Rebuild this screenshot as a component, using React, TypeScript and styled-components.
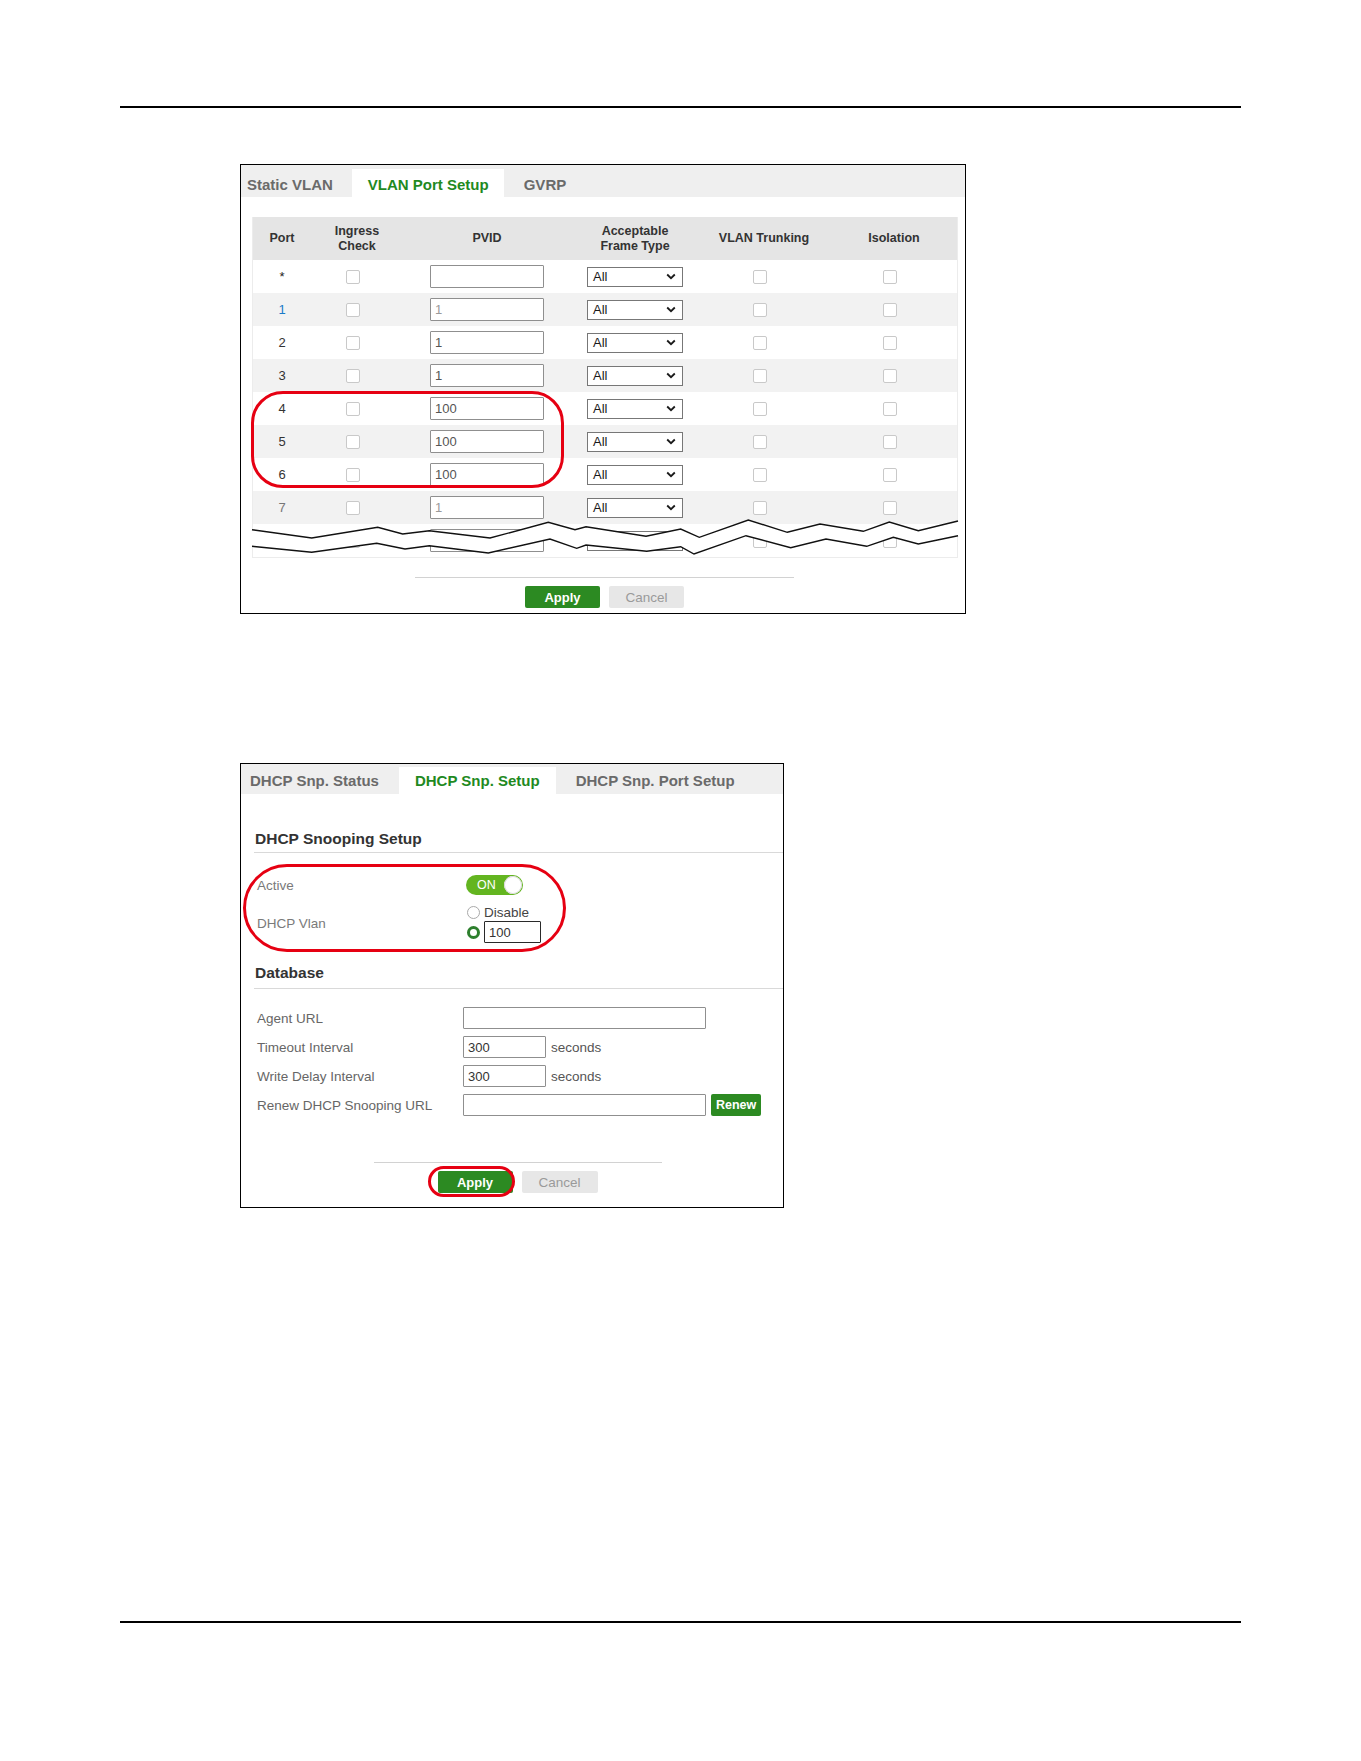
import styled, { createGlobalStyle } from "styled-components";

const GlobalStyle = createGlobalStyle`
  body {
    margin: 0;
    background: #fff;
    font-family: "Liberation Sans", Arial, sans-serif;
    color: #333;
  }
`;

const Page = styled.div`
  width: 1361px;
  min-height: 1761px;
  padding: 106px 120px 0;
  box-sizing: border-box;
`;

const Rule = styled.div<{ $gap: number }>`
  margin-top: ${(p) => p.$gap}px;
  border-top: 2px solid #000;
`;

const Figure = styled.div<{ $width: number; $gap: number; $bottom: number }>`
  position: relative;
  width: ${(p) => p.$width}px;
  margin: ${(p) => p.$gap}px 0 0 120px;
  padding-bottom: ${(p) => p.$bottom}px;
  border: 1px solid #000;
  box-sizing: border-box;
  background: #fff;
`;

const TabBar = styled.div<{ $height: number }>`
  display: flex;
  align-items: flex-end;
  height: ${(p) => p.$height}px;
  background: #efefef;
`;

const Tab = styled.div<{ $active?: boolean; $pad: string; $height: number; $drop: number }>`
  height: ${(p) => p.$height}px;
  box-sizing: border-box;
  padding: ${(p) => p.$pad};
  padding-top: ${(p) => p.$drop}px;
  line-height: ${(p) => p.$height - p.$drop}px;
  font-size: 15px;
  font-weight: bold;
  white-space: nowrap;
  color: ${(p) => (p.$active ? "#1f8a1f" : "#6a6a6a")};
  background: ${(p) => (p.$active ? "#fff" : "transparent")};
`;

/* ---------- VLAN port table ---------- */

const cols = "58px 92px 168px 128px 130px 130px";

const TableWrap = styled.div`
  position: relative;
  width: 706px;
  margin: 20px 0 0 11px;
  border: 1px solid #ececec;
  border-top: 0;
  box-sizing: border-box;
`;

const HeadRow = styled.div`
  display: grid;
  grid-template-columns: ${cols};
  align-items: center;
  height: 43px;
  background: #e5e5e5;
  font-size: 12.5px;
  font-weight: bold;
  line-height: 15px;
  text-align: center;
  color: #333;
`;

const Row = styled.div<{ $shade: boolean; $height: number }>`
  display: grid;
  grid-template-columns: ${cols};
  align-items: center;
  height: ${(p) => p.$height}px;
  background: ${(p) => (p.$shade ? "#f2f2f2" : "#fff")};
  overflow: hidden;
`;

const Cell = styled.div`
  display: flex;
  justify-content: center;
  align-items: center;
`;

const PortNo = styled.span<{ $tone: string }>`
  font-size: 13px;
  color: ${(p) => p.$tone};
`;

const Check = styled.input.attrs({ type: "checkbox" })`
  appearance: none;
  width: 14px;
  height: 14px;
  margin: 0 9px 0 0;
  border: 1.5px solid #c9c9c9;
  border-radius: 2px;
  background: #fff;
  box-sizing: border-box;
`;

const TextBox = styled.input<{ $width: number; $height: number; $tone?: string; $dark?: boolean }>`
  width: ${(p) => p.$width}px;
  height: ${(p) => p.$height}px;
  padding: 0 0 0 4px;
  margin: 0;
  border: ${(p) => (p.$dark ? "1.5px solid #2a2a2a" : "1px solid #8f8f8f")};
  border-radius: 1px;
  box-sizing: border-box;
  font-family: "Liberation Sans", Arial, sans-serif;
  font-size: 13px;
  color: ${(p) => p.$tone ?? "#555"};
  background: #fff;
  outline: none;
`;

const SelectBox = styled.div`
  display: flex;
  justify-content: space-between;
  align-items: center;
  width: 96px;
  height: 20px;
  padding: 0 6px 0 5px;
  border: 1px solid #777;
  box-sizing: border-box;
  font-size: 13px;
  color: #1a1a1a;
  background: #fff;
`;

const BreakMark = styled.svg`
  position: absolute;
  left: -1px;
  top: 297px;
  overflow: visible;
`;

/* ---------- footer ---------- */

const Footer = styled.div<{ $gap: number; $shift: number }>`
  display: flex;
  justify-content: center;
  margin-top: ${(p) => p.$gap}px;
  padding-left: ${(p) => p.$shift}px;
`;

const FooterInner = styled.div<{ $width: number }>`
  display: flex;
  justify-content: center;
  gap: 9px;
  width: ${(p) => p.$width}px;
  padding-top: 8px;
  border-top: 1px solid #d2d2d2;
`;

const Button = styled.button<{ $primary?: boolean; $width: number }>`
  width: ${(p) => p.$width}px;
  height: 22px;
  padding: 0;
  border: 0;
  border-radius: 2px;
  font-family: "Liberation Sans", Arial, sans-serif;
  font-size: ${(p) => (p.$primary ? 13 : 13.5)}px;
  font-weight: ${(p) => (p.$primary ? "bold" : "normal")};
  color: ${(p) => (p.$primary ? "#fff" : "#9a9a9a")};
  background: ${(p) => (p.$primary ? "#2c8a22" : "#e7e7e7")};
`;

const Highlight = styled.div<{ $radius: string }>`
  position: absolute;
  border: 3px solid #e60012;
  border-radius: ${(p) => p.$radius};
  box-sizing: border-box;
  pointer-events: none;
`;

/* ---------- DHCP snooping form ---------- */

const SectionTitle = styled.div<{ $gap: number; $pad: number }>`
  margin: ${(p) => p.$gap}px 0 0 13px;
  padding: 0 0 ${(p) => p.$pad}px 1px;
  border-bottom: 1px solid #d9d9d9;
  font-size: 15.5px;
  font-weight: bold;
  line-height: 20px;
  color: #333;
`;

const FieldRow = styled.div<{ $gap: number }>`
  display: flex;
  align-items: center;
  margin: ${(p) => p.$gap}px 0 0 16px;
  min-height: 22px;
`;

const Label = styled.div<{ $light?: boolean }>`
  width: 206px;
  font-size: 13.5px;
  color: ${(p) => (p.$light ? "#7a7a7a" : "#666")};
`;

const Unit = styled.span`
  margin-left: 5px;
  font-size: 13.5px;
  color: #555;
`;

const Switch = styled.div`
  display: flex;
  justify-content: space-between;
  align-items: center;
  width: 57px;
  height: 20px;
  margin-left: 3px;
  padding: 0 1px 0 11px;
  border-radius: 10px;
  box-sizing: border-box;
  background: #63b520;
  color: #fff;
  font-size: 12.5px;
`;

const Knob = styled.span`
  width: 18px;
  height: 18px;
  border-radius: 50%;
  background: #fff;
  box-shadow: inset 0 0 0 1px #d8d8d8;
`;

const RadioGroup = styled.div`
  display: flex;
  flex-direction: column;
  margin-left: 4px;
`;

const RadioLine = styled.div<{ $height: number }>`
  display: flex;
  align-items: center;
  gap: 4px;
  height: ${(p) => p.$height}px;
  font-size: 13.5px;
  color: #444;
`;

const Radio = styled.span<{ $on?: boolean }>`
  width: 13px;
  height: 13px;
  border-radius: 50%;
  box-sizing: border-box;
  border: ${(p) => (p.$on ? "3.5px solid #2d7f2d" : "1px solid #a9a9a9")};
  background: #fff;
`;

const SmallButton = styled.button`
  height: 22px;
  margin-left: 5px;
  padding: 0 5px;
  border: 0;
  border-radius: 2px;
  font-family: "Liberation Sans", Arial, sans-serif;
  font-size: 12.5px;
  font-weight: bold;
  color: #fff;
  background: #2c8a22;
`;

const Chevron = () => (
  <svg width="10" height="7" viewBox="0 0 10 7">
    <path d="M1.2 1.5 L5 5.2 L8.8 1.5" fill="none" stroke="#1a1a1a" strokeWidth="1.8" />
  </svg>
);

type PortRow = { port: string; pvid: string; tone: string; pvidTone?: string };

const ports: PortRow[] = [
  { port: "*", pvid: "", tone: "#222" },
  { port: "1", pvid: "1", tone: "#1b7bc8", pvidTone: "#9a9a9a" },
  { port: "2", pvid: "1", tone: "#333" },
  { port: "3", pvid: "1", tone: "#333" },
  { port: "4", pvid: "100", tone: "#333" },
  { port: "5", pvid: "100", tone: "#333" },
  { port: "6", pvid: "100", tone: "#333" },
  { port: "7", pvid: "1", tone: "#777", pvidTone: "#9a9a9a" },
  { port: "", pvid: "", tone: "#333" },
];

// break mark drawn over the cut-off last row
const upper: [number, number][] = [
  [0, 15.7], [59.7, 24], [125.7, 13.3], [150.7, 20], [177.3, 16.7], [238, 24],
  [296.3, 8.3], [323, 15.7], [334, 12.7], [394, 22.3], [428.7, 15], [447.3, 23.3],
  [496.3, 6], [535.3, 18.3], [568, 10], [611.3, 17.3], [637.3, 8], [666.3, 16.7], [706, 7],
];
const lower: [number, number][] = [
  [0, 32.3], [59.7, 38.3], [124.7, 29.3], [153, 35], [177.3, 31.7], [236.3, 39],
  [298, 25], [324.7, 34.3], [334, 31], [394.7, 37.3], [428.7, 32.7], [442, 40],
  [494, 21.7], [538.7, 33.7], [574, 25], [614.7, 32.3], [641.3, 23.3], [666.3, 30], [706, 21.7],
];
const pts = (list: [number, number][]) => list.map(([x, y]) => `${x},${y}`).join(" ");

const VlanPortSetup = () => (
  <Figure $width={726} $gap={56} $bottom={5}>
    <TabBar $height={32}>
      <Tab $pad="0 19px 0 6px" $height={28} $drop={3}>Static VLAN</Tab>
      <Tab $active $pad="0 15px 0 16px" $height={28} $drop={3}>VLAN Port Setup</Tab>
      <Tab $pad="0 15px 0 20px" $height={28} $drop={3}>GVRP</Tab>
    </TabBar>

    <TableWrap>
      <HeadRow>
        <div>Port</div>
        <div>Ingress<br />Check</div>
        <div>PVID</div>
        <div>Acceptable<br />Frame Type</div>
        <div>VLAN Trunking</div>
        <div>Isolation</div>
      </HeadRow>
      {ports.map((r, i) => (
        <Row key={i} $shade={i % 2 === 1} $height={i === ports.length - 1 ? 33 : 33}>
          <Cell><PortNo $tone={r.tone}>{r.port}</PortNo></Cell>
          <Cell><Check readOnly /></Cell>
          <Cell><TextBox $width={114} $height={23} $tone={r.pvidTone} defaultValue={r.pvid} readOnly /></Cell>
          <Cell><SelectBox>All<Chevron /></SelectBox></Cell>
          <Cell><Check readOnly /></Cell>
          <Cell><Check readOnly /></Cell>
        </Row>
      ))}
      <BreakMark width="706" height="45">
        <polygon points={pts([...upper, ...[...lower].reverse()])} fill="#fff" />
        <polyline points={pts(upper)} fill="none" stroke="#111" strokeWidth="1.4" />
        <polyline points={pts(lower)} fill="none" stroke="#111" strokeWidth="1.4" />
      </BreakMark>
    </TableWrap>

    <Footer $gap={19} $shift={3}>
      <FooterInner $width={379}>
        <Button $primary $width={75}>Apply</Button>
        <Button $width={75}>Cancel</Button>
      </FooterInner>
    </Footer>

    <Highlight $radius="32px" style={{ left: 10, top: 226, width: 313, height: 97 }} />
  </Figure>
);

const DhcpSnoopingSetup = () => (
  <Figure $width={544} $gap={149} $bottom={14}>
    <TabBar $height={30}>
      <Tab $pad="0 20px 0 9px" $height={27} $drop={0}>DHCP Snp. Status</Tab>
      <Tab $active $pad="0 16px 0 16px" $height={27} $drop={0}>DHCP Snp. Setup</Tab>
      <Tab $pad="0 10px 0 20px" $height={27} $drop={0}>DHCP Snp. Port Setup</Tab>
    </TabBar>

    <SectionTitle $gap={35} $pad={3}>DHCP Snooping Setup</SectionTitle>
    <FieldRow $gap={21}>
      <Label $light>Active</Label>
      <Switch>ON<Knob /></Switch>
    </FieldRow>
    <FieldRow $gap={8}>
      <Label $light>DHCP Vlan</Label>
      <RadioGroup>
        <RadioLine $height={17}><Radio />Disable</RadioLine>
        <RadioLine $height={22}>
          <Radio $on />
          <TextBox $width={57} $height={22} $dark $tone="#333" defaultValue="100" readOnly />
        </RadioLine>
      </RadioGroup>
    </FieldRow>

    <SectionTitle $gap={20} $pad={5}>Database</SectionTitle>
    <FieldRow $gap={18}>
      <Label>Agent URL</Label>
      <TextBox $width={243} $height={22} readOnly />
    </FieldRow>
    <FieldRow $gap={7}>
      <Label>Timeout Interval</Label>
      <TextBox $width={83} $height={22} $tone="#333" defaultValue="300" readOnly />
      <Unit>seconds</Unit>
    </FieldRow>
    <FieldRow $gap={7}>
      <Label>Write Delay Interval</Label>
      <TextBox $width={83} $height={22} $tone="#333" defaultValue="300" readOnly />
      <Unit>seconds</Unit>
    </FieldRow>
    <FieldRow $gap={7}>
      <Label>Renew DHCP Snooping URL</Label>
      <TextBox $width={243} $height={22} readOnly />
      <SmallButton>Renew</SmallButton>
    </FieldRow>

    <Footer $gap={46} $shift={11}>
      <FooterInner $width={288}>
        <Button $primary $width={75}>Apply</Button>
        <Button $width={76}>Cancel</Button>
      </FooterInner>
    </Footer>

    <Highlight $radius="46px" style={{ left: 2, top: 100, width: 323, height: 88 }} />
    <Highlight $radius="16px" style={{ left: 187, top: 402, width: 87, height: 31 }} />
  </Figure>
);

export default function App() {
  return (
    <>
      <GlobalStyle />
      <Page>
        <Rule $gap={0} />
        <VlanPortSetup />
        <DhcpSnoopingSetup />
        <Rule $gap={413} />
      </Page>
    </>
  );
}
